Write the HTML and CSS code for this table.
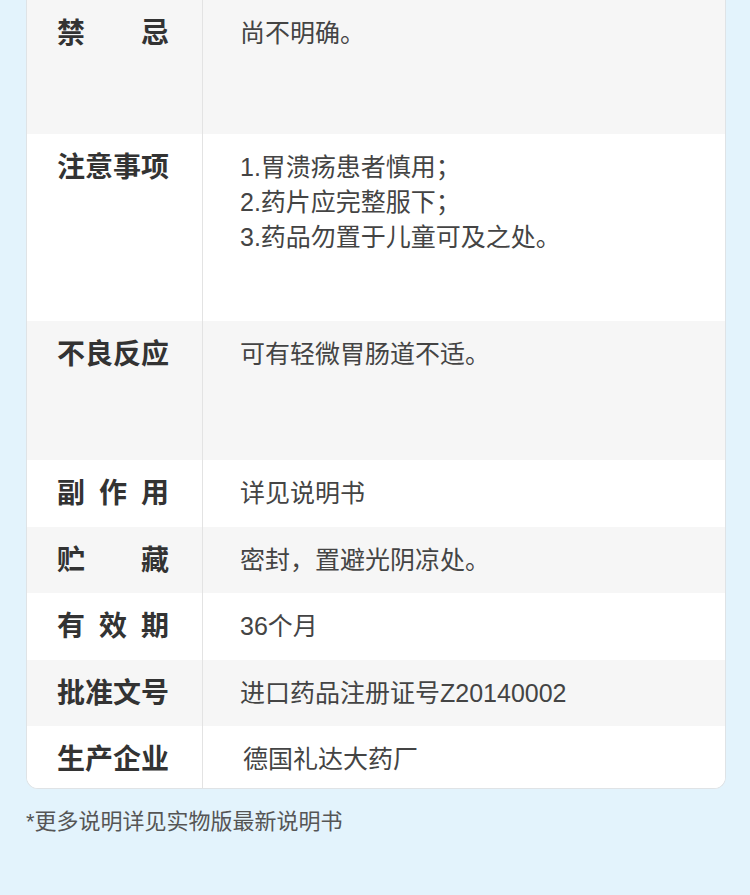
FILE: index.html
```html
<!DOCTYPE html>
<html lang="zh-CN">
<head>
    <meta charset="UTF-8">
    <meta name="viewport" content="width=device-width, initial-scale=1.0">
    <title>药品说明</title>
    <link rel="stylesheet" href="styles.css">
</head>
<body>
    <div class="page">
        <div class="spec-card">
            <div class="spec-row spec-row--gray spec-row--first">
                <div class="spec-label">禁忌</div>
                <div class="spec-value">尚不明确。</div>
            </div>
            <div class="spec-row spec-row--notes">
                <div class="spec-label">注意事项</div>
                <div class="spec-value">
                    1.胃溃疡患者慎用；<br>
                    2.药片应完整服下；<br>
                    3.药品勿置于儿童可及之处。
                </div>
            </div>
            <div class="spec-row spec-row--gray spec-row--reaction">
                <div class="spec-label">不良反应</div>
                <div class="spec-value">可有轻微胃肠道不适。</div>
            </div>
            <div class="spec-row">
                <div class="spec-label">副作用</div>
                <div class="spec-value">详见说明书</div>
            </div>
            <div class="spec-row spec-row--gray">
                <div class="spec-label">贮藏</div>
                <div class="spec-value">密封，置避光阴凉处。</div>
            </div>
            <div class="spec-row">
                <div class="spec-label">有效期</div>
                <div class="spec-value">36个月</div>
            </div>
            <div class="spec-row spec-row--gray">
                <div class="spec-label">批准文号</div>
                <div class="spec-value">进口药品注册证号Z20140002</div>
            </div>
            <div class="spec-row spec-row--last">
                <div class="spec-label">生产企业</div>
                <div class="spec-value spec-value--maker">德国礼达大药厂</div>
            </div>
        </div>
        <p class="spec-note">*更多说明详见实物版最新说明书</p>
    </div>
</body>
</html>
```

FILE: styles.css
```css
body {
    margin: 0;
    padding: 0;
    background-color: #e3f3fc;
    font-family: "Liberation Sans", "Noto Sans CJK SC", sans-serif;
    color: #333;
}
.page {
    padding: 0 24px 0 26px;
}
.spec-card {
    background-color: #fff;
    border: 1px solid #dfe3e6;
    border-top: none;
    border-radius: 0 0 12px 12px;
    overflow: hidden;
}
.spec-row {
    display: grid;
    grid-template-columns: 175px 1fr;
    background-color: #fff;
}
.spec-row--gray {
    background-color: #f6f6f6;
}
.spec-row--first { min-height: 134px; }
.spec-row--notes { min-height: 187px; }
.spec-row--reaction { min-height: 139px; }

.spec-label,
.spec-value {
    padding: 16px 0 15.5px;
    line-height: 35px;
}
.spec-row--first .spec-label,
.spec-row--first .spec-value {
    padding-top: 16px;
}
.spec-row--last .spec-label,
.spec-row--last .spec-value {
    padding-bottom: 11px;
}
.spec-label {
    box-sizing: border-box;
    width: 142px;
    padding-left: 30px;
    font-size: 28px;
    font-weight: 700;
    color: #333;
    text-align: justify;
    text-align-last: justify;
}
.spec-value {
    border-left: 1px solid #e3e3e3;
    padding-left: 37px;
    font-size: 25px;
    color: #444;
}
.spec-value--maker {
    padding-left: 40px;
}
.spec-note {
    margin: 17px 0 0;
    font-size: 22px;
    line-height: 32px;
    color: #555;
}
```
